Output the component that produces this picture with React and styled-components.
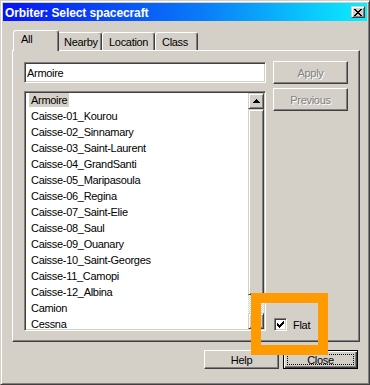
import React from 'react'
import styled, { createGlobalStyle, css } from 'styled-components'

const face = '#d4d0c8'

const GlobalStyle = createGlobalStyle`
  body {
    margin: 0;
    background: ${face};
    font-family: "Liberation Sans", Arial, sans-serif;
    font-size: 11px;
  }
`

// 3d borders, win2k style
const raisedBtn = css`
  border: 1px solid;
  border-color: #fff #404040 #404040 #fff;
  box-shadow: inset -1px -1px #808080;
`
const raisedBar = css`
  border: 1px solid;
  border-color: ${face} #404040 #404040 ${face};
  box-shadow: inset 1px 1px #fff, inset -1px -1px #808080;
`
const sunken = css`
  border: 1px solid;
  border-color: #808080 #fff #fff #808080;
  box-shadow: inset 1px 1px #404040, inset -1px -1px ${face};
`

const spacecraft = [
  'Armoire',
  'Caisse-01_Kourou',
  'Caisse-02_Sinnamary',
  'Caisse-03_Saint-Laurent',
  'Caisse-04_GrandSanti',
  'Caisse-05_Maripasoula',
  'Caisse-06_Regina',
  'Caisse-07_Saint-Elie',
  'Caisse-08_Saul',
  'Caisse-09_Ouanary',
  'Caisse-10_Saint-Georges',
  'Caisse-11_Camopi',
  'Caisse-12_Albina',
  'Camion',
  'Cessna',
]

const tabs = [
  { label: 'All', w: 42 },
  { label: 'Nearby', w: 45 },
  { label: 'Location', w: 53 },
  { label: 'Class', w: 43 },
]

export default function App() {
  return (
    <>
      <GlobalStyle />
      <Window>
        <TitleBar>
          <Title>Orbiter: Select spacecraft</Title>
          <TitleButton>
            <svg width="8" height="7" viewBox="0 0 8 7" shapeRendering="crispEdges">
              <path d="M0 0h2v1h-2zM6 0h2v1h-2zM1 1h2v1h-2zM5 1h2v1h-2zM2 2h4v1h-4zM3 3h2v1h-2zM2 4h4v1h-4zM1 5h2v1h-2zM5 5h2v1h-2zM0 6h2v1h-2zM6 6h2v1h-2z" fill="#000" />
            </svg>
          </TitleButton>
        </TitleBar>

        <Client>
          <TabStrip>
            {tabs.map((t, i) => (
              <Tab key={t.label} $w={t.w} $active={i === 0}>{t.label}</Tab>
            ))}
          </TabStrip>
          <Panel>
            <LeftCol>
              <Edit readOnly value="Armoire" />
              <ListBox>
                <Items>
                  {spacecraft.map((name, i) => (
                    <Item key={name}><ItemText $selected={i === 0}>{name}</ItemText></Item>
                  ))}
                </Items>
                <ScrollBar>
                  <ScrollButton>
                    <svg width="7" height="4" viewBox="0 0 7 4" shapeRendering="crispEdges">
                      <path d="M3 0h1v1h1v1h1v1h1v1h-7v-1h1v-1h1v-1h1z" fill="#000" />
                    </svg>
                  </ScrollButton>
                  <Thumb />
                  <Track />
                  <ScrollButton>
                    <svg width="7" height="4" viewBox="0 0 7 4" shapeRendering="crispEdges">
                      <path d="M0 0h7v1h-1v1h-1v1h-1v1h-1v-1h-1v-1h-1v-1h-1z" fill="#000" />
                    </svg>
                  </ScrollButton>
                </ScrollBar>
              </ListBox>
            </LeftCol>
            <RightCol>
              <PushButton disabled>Apply</PushButton>
              <PushButton disabled>Previous</PushButton>
              <Spacer />
              <CheckRow>
                <CheckBox>
                  <svg width="7" height="7" viewBox="0 0 7 7" shapeRendering="crispEdges">
                    <path d="M6 0h1v3h-1v1h-1v1h-1v1h-1v1h-1v-1h-1v-1h-1v-3h1v1h1v1h1v-1h1v-1h1v-1h1z" fill="#000" />
                  </svg>
                </CheckBox>
                <span>Flat</span>
              </CheckRow>
            </RightCol>
          </Panel>
          <Footer>
            <PushButton>Help</PushButton>
            <PushButton $default>Close</PushButton>
          </Footer>
        </Client>

        <Highlight />
      </Window>
    </>
  )
}

const Window = styled.div`
  position: relative;
  width: 370px;
  height: 385px;
  box-sizing: border-box;
  background: ${face};
  ${raisedBar}
  padding: 2px;
  display: flex;
  flex-direction: column;
`
const TitleBar = styled.div`
  height: 18px;
  flex: none;
  display: flex;
  align-items: center;
  justify-content: space-between;
  padding: 0 2px;
  background: linear-gradient(90deg, #0614f4 0%, #0a7cf8 55%, #0af0ff 100%);
`
const Title = styled.div`
  color: #fff;
  font-weight: bold;
  font-size: 12px;
  letter-spacing: -0.1px;
  padding-top: 1px;
`
const TitleButton = styled.div`
  width: 14px;
  height: 12px;
  box-sizing: border-box;
  background: ${face};
  ${raisedBar}
  display: flex;
  align-items: center;
  justify-content: center;
`
const Client = styled.div`
  flex: 1;
  display: flex;
  flex-direction: column;
  padding: 9px 7px 0 9px;
`
const TabStrip = styled.div`
  height: 20px;
  display: flex;
  align-items: flex-end;
  padding-left: 3px;
`
const Tab = styled.div`
  position: relative;
  box-sizing: border-box;
  width: ${p => p.$w + (p.$active ? 4 : 0)}px;
  height: ${p => (p.$active ? 21 : 18)}px;
  margin: ${p => (p.$active ? '0 -2px -1px -2px' : '0')};
  z-index: ${p => (p.$active ? 2 : 1)};
  padding: ${p => (p.$active ? '1px 0 0 7px' : '2px 0 0 6px')};
  line-height: 14px;
  letter-spacing: -0.3px;
  background: ${face};
  border-top: 1px solid #fff;
  border-left: 1px solid #fff;
  border-right: 1px solid #404040;
  box-shadow: inset -1px 0 #808080;
  border-radius: 3px 3px 0 0;
`
const Panel = styled.div`
  display: grid;
  grid-template-columns: 1fr 75px;
  column-gap: 7px;
  padding: 10px 11px 10px 11px;
  background: ${face};
  border: 1px solid;
  border-color: #fff #404040 #404040 #fff;
  box-shadow: inset -1px -1px #808080;
`
const LeftCol = styled.div`
  display: flex;
  flex-direction: column;
  gap: 8px;
`
const Edit = styled.input`
  margin: 1px 0 0;
  height: 21px;
  box-sizing: border-box;
  ${sunken}
  background: #fff;
  padding: 0 2px;
  font: 11px "Liberation Sans", Arial, sans-serif;
  letter-spacing: -0.3px;
  color: #000;
  outline: none;
`
const ListBox = styled.div`
  height: 240px;
  box-sizing: border-box;
  ${sunken}
  padding: 1px;
  background: #fff;
  display: flex;
  overflow: hidden;
`
const Items = styled.div`
  flex: 1;
  overflow: hidden;
`
const Item = styled.div`
  height: 16px;
  padding-left: 3px;
  white-space: nowrap;
`
const ItemText = styled.span`
  display: inline-block;
  padding: 0 2px;
  line-height: 14px;
  letter-spacing: -0.3px;
  background: ${p => (p.$selected ? face : 'transparent')};
`
const ScrollBar = styled.div`
  width: 16px;
  flex: none;
  display: flex;
  flex-direction: column;
`
const ScrollButton = styled.div`
  height: 16px;
  flex: none;
  box-sizing: border-box;
  background: ${face};
  ${raisedBar}
  display: flex;
  align-items: center;
  justify-content: center;
`
const Thumb = styled.div`
  height: 186px;
  flex: none;
  box-sizing: border-box;
  background: ${face};
  ${raisedBar}
`
const Track = styled.div`
  flex: 1;
  background: repeating-conic-gradient(#fff 0 25%, ${face} 0 50%) 0 0 / 2px 2px;
`
const RightCol = styled.div`
  display: flex;
  flex-direction: column;
  gap: 4px;
`
const PushButton = styled.button`
  position: relative;
  width: 75px;
  height: ${p => (p.disabled ? 23 : 19)}px;
  box-sizing: border-box;
  padding: 0;
  background: ${face};
  font: 11px "Liberation Sans", Arial, sans-serif;
  letter-spacing: -0.3px;
  color: #000;
  ${raisedBtn}
  &:disabled {
    color: #808080;
    text-shadow: 1px 1px #fff;
  }
  ${p => p.$default && css`
    border-color: #000;
    box-shadow: inset 1px 1px #fff, inset -1px -1px #404040, inset -2px -2px #808080;
    &::after {
      content: '';
      position: absolute;
      inset: 3px;
      border: 1px dotted #000;
    }
  `}
`
const Spacer = styled.div`
  flex: 1;
`
const CheckRow = styled.div`
  display: flex;
  align-items: center;
  gap: 6px;
  padding-left: 1px;
  letter-spacing: -0.3px;
`
const CheckBox = styled.div`
  width: 13px;
  height: 13px;
  box-sizing: border-box;
  ${sunken}
  background: #fff;
  display: flex;
  align-items: center;
  justify-content: center;
`
const Footer = styled.div`
  display: flex;
  justify-content: flex-end;
  gap: 4px;
  padding: 8px 2px 0 0;
`
const Highlight = styled.div`
  position: absolute;
  left: 250px;
  top: 292px;
  width: 77px;
  height: 62px;
  box-sizing: border-box;
  border: 10px solid #ff9b00;
  pointer-events: none;
`
